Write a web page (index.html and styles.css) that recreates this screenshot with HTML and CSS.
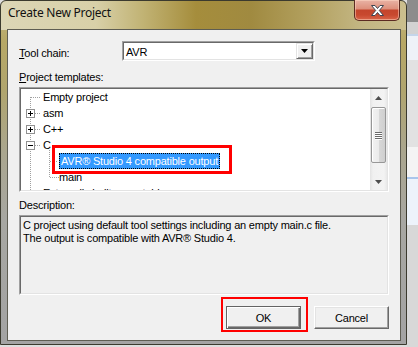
FILE: index.html
```html
<!DOCTYPE html>
<html lang="en">
<head>
    <meta charset="UTF-8">
    <title>Create New Project</title>
    <link rel="stylesheet" href="styles.css">
</head>
<body>
<div class="screen">
    <div class="window">
        <div class="titlebar">
            <span class="title">Create New Project</span>
            <div class="close-btn">
                <svg width="13" height="11" viewBox="0 0 13 11">
                    <polygon points="0.5,0.5 4,0.5 6.5,3.5 9,0.5 12.5,0.5 8.3,5.5 12.5,10.5 9,10.5 6.5,7.5 4,10.5 0.5,10.5 4.7,5.5" fill="#fff" stroke="#3f4450" stroke-width="1"/>
                </svg>
            </div>
        </div>

        <div class="client">
            <div class="field-row">
                <label class="field-label"><u>T</u>ool chain:</label>
                <div class="combo">
                    <div class="combo-inner">
                        <span class="combo-value">AVR</span>
                        <span class="combo-btn">
                            <svg width="7" height="4" viewBox="0 0 7 4"><polygon points="0,0 7,0 3.5,4" fill="#000"/></svg>
                        </span>
                    </div>
                </div>
            </div>

            <div class="section-label"><u>P</u>roject templates:</div>
            <div class="sunken tree-box">
                <div class="sunken-inner tree-inner">
                    <div class="tree">
                        <svg class="tree-lines" width="349" height="101" viewBox="0 0 349 101">
                            <g stroke="#a0a0a0" stroke-dasharray="1 1" fill="none">
                                <line x1="9.5" y1="8" x2="9.5" y2="101"/>
                                <line x1="10" y1="8.5" x2="20" y2="8.5"/>
                                <line x1="14" y1="24.5" x2="20" y2="24.5"/>
                                <line x1="14" y1="40.5" x2="20" y2="40.5"/>
                                <line x1="14" y1="56.5" x2="20" y2="56.5"/>
                                <line x1="28.5" y1="61" x2="28.5" y2="89"/>
                                <line x1="29" y1="72.5" x2="37" y2="72.5"/>
                                <line x1="29" y1="88.5" x2="38" y2="88.5"/>
                            </g>
                            <g fill="#fff" stroke="#919191">
                                <rect x="5.5" y="20.5" width="8" height="8"/>
                                <rect x="5.5" y="36.5" width="8" height="8"/>
                                <rect x="5.5" y="52.5" width="8" height="8"/>
                            </g>
                            <g stroke="#000">
                                <line x1="7" y1="24.5" x2="12" y2="24.5"/>
                                <line x1="9.5" y1="22" x2="9.5" y2="27"/>
                                <line x1="7" y1="40.5" x2="12" y2="40.5"/>
                                <line x1="9.5" y1="38" x2="9.5" y2="43"/>
                                <line x1="7" y1="56.5" x2="12" y2="56.5"/>
                            </g>
                        </svg>
                        <div class="tree-row">Empty project</div>
                        <div class="tree-row">asm</div>
                        <div class="tree-row">C++</div>
                        <div class="tree-row">C</div>
                        <div class="tree-row level-2"><span class="tree-selected">AVR® Studio 4 compatible output</span></div>
                        <div class="tree-row level-2">main</div>
                        <div class="tree-row">Externally built executable</div>
                        <div class="mark mark-tree"></div>
                    </div>
                    <div class="scrollbar">
                        <div class="scroll-arrow">
                            <svg width="7" height="4" viewBox="0 0 7 4"><polygon points="0,4 7,4 3.5,0" fill="#4d4d4d"/></svg>
                        </div>
                        <div class="scroll-track">
                            <div class="scroll-thumb">
                                <span class="grip"></span><span class="grip"></span><span class="grip"></span><span class="grip"></span>
                            </div>
                        </div>
                        <div class="scroll-arrow">
                            <svg width="7" height="4" viewBox="0 0 7 4"><polygon points="0,0 7,0 3.5,4" fill="#4d4d4d"/></svg>
                        </div>
                    </div>
                </div>
            </div>

            <div class="section-label desc-label">Description:</div>
            <div class="sunken desc-box">
                <div class="sunken-inner desc-inner">
                    C project using default tool settings including an empty main.c file.<br>
                    The output is compatible with AVR® Studio 4.
                </div>
            </div>

            <div class="button-row">
                <button class="btn btn-default">OK</button>
                <button class="btn">Cancel</button>
                <div class="mark mark-ok"></div>
            </div>
        </div>
    </div>
    <div class="backdrop"></div>
</div>
</body>
</html>
```

FILE: styles.css
```css
* {
    box-sizing: border-box;
}
html, body {
    margin: 0;
    padding: 0;
}
body {
    width: 418px;
    height: 347px;
    overflow: hidden;
    background-color: #dedede;
    font-family: "Liberation Sans", Arial, sans-serif;
    font-size: 11px;
    letter-spacing: -0.2px;
    color: #000;
}
.screen {
    display: flex;
    height: 347px;
}
.window {
    width: 407px;
    height: 345px;
    display: flex;
    flex-direction: column;
    border: 1px solid #3b3a2e;
    border-radius: 6px 6px 0 0;
    padding: 0 5px 3px 6px;
    background:
        linear-gradient(to right, #dcd6b6 0, #d8d0a8 95px, #c2b476 140px, #a58d3c 195px, #a08a40 250px, #b3a160 310px, #c3b683 360px, #cbbf8e 407px) top left / 100% 29px no-repeat,
        linear-gradient(to bottom, #c6b985 0, #b7a866 40px, #b0a56e 90px, #aaa68e 150px, #a7a7a2 220px, #a3a3a3 100%);
}
.titlebar {
    height: 28px;
    display: flex;
    align-items: flex-start;
}
.title {
    padding: 4px 0 0 1px;
    font-family: "Noto Sans", sans-serif;
    font-size: 12px;
    letter-spacing: -0.25px;
    line-height: 16px;
    color: #111;
}
.close-btn {
    margin: -1px 1px 0 auto;
    width: 46px;
    height: 21px;
    display: flex;
    align-items: center;
    justify-content: center;
    border: 1px solid #5c2b22;
    border-top: none;
    border-radius: 0 0 5px 5px;
    background: linear-gradient(to bottom, #e9b3a5 0, #dd8f7b 45%, #c4452c 50%, #c8492f 75%, #d9654a 100%);
    box-shadow: inset 0 0 0 1px rgba(255, 220, 200, 0.5);
}
.close-btn svg {
    margin-top: 1px;
}
.client {
    flex: 1;
    border: 1px solid #5e5d52;
    background-color: #f0f0f0;
    padding: 11px;
    display: flex;
    flex-direction: column;
}
.field-row {
    display: flex;
    height: 20px;
}
.field-label {
    width: 103px;
    padding-top: 5px;
    line-height: 15px;
}
.combo {
    width: 193px;
    height: 20px;
    border: 1px solid;
    border-color: #a0a0a0 #fff #fff #a0a0a0;
}
.combo-inner {
    height: 100%;
    display: flex;
    border: 1px solid;
    border-color: #696969 #e3e3e3 #e3e3e3 #696969;
    background-color: #fff;
}
.combo-value {
    flex: 1;
    padding: 2px 0 0 2px;
    line-height: 15px;
}
.combo-btn {
    width: 17px;
    height: 16px;
    display: flex;
    align-items: center;
    justify-content: center;
    background-color: #f0f0f0;
    border: 1px solid;
    border-color: #e3e3e3 #696969 #696969 #e3e3e3;
    box-shadow: inset 1px 1px 0 #fff, inset -1px -1px 0 #a0a0a0;
}
.section-label {
    margin-top: 9px;
    line-height: 15px;
}
.desc-label {
    margin-top: 6px;
}
.sunken {
    border: 1px solid;
    border-color: #a0a0a0 #fff #fff #a0a0a0;
    margin-top: 2px;
}
.sunken-inner {
    height: 100%;
    border: 1px solid;
    border-color: #696969 #e3e3e3 #e3e3e3 #696969;
}
.tree-box {
    height: 105px;
}
.tree-inner {
    display: flex;
    background-color: #fff;
}
.tree {
    flex: 1;
    position: relative;
    overflow: hidden;
}
.tree-lines {
    position: absolute;
    top: 0;
    left: 0;
}
.tree-row {
    position: relative;
    height: 16px;
    line-height: 16px;
    padding-left: 22px;
    white-space: nowrap;
}
.tree-row.level-2 {
    padding-left: 38px;
}
.tree-selected {
    display: inline-block;
    vertical-align: top;
    height: 16px;
    line-height: 14px;
    padding: 0 1px;
    border: 1px dotted #000;
    background-color: #3399ff;
    color: #fff;
}
.mark {
    position: absolute;
    border: 3px solid #ff0000;
}
.mark-tree {
    left: 31px;
    top: 56px;
    width: 180px;
    height: 29px;
}
.scrollbar {
    width: 17px;
    display: flex;
    flex-direction: column;
    background: linear-gradient(to right, #e3e3e3 0, #f0f0f0 3px, #f3f3f3 14px, #e8e8e8 17px);
}
.scroll-arrow {
    height: 17px;
    display: flex;
    align-items: center;
    justify-content: center;
}
.scroll-track {
    flex: 1;
    padding-top: 1px;
}
.scroll-thumb {
    margin: 0 1px;
    height: 56px;
    border: 1px solid #979797;
    border-radius: 2px;
    background: linear-gradient(to right, #f2f2f2 0, #ebebeb 50%, #d8d8d8 51%, #cfcfcf 100%);
    box-shadow: inset 1px 1px 0 #fff;
    display: flex;
    flex-direction: column;
    align-items: center;
    justify-content: center;
    gap: 1px;
}
.grip {
    width: 7px;
    height: 1px;
    background-color: #6b6b6b;
    box-shadow: 0 1px 0 #fff;
}
.desc-box {
    height: 80px;
}
.desc-inner {
    padding: 2px 2px;
    line-height: 13px;
}
.button-row {
    position: relative;
    margin-top: 11px;
    display: flex;
    justify-content: flex-end;
    gap: 13px;
}
.btn {
    width: 75px;
    height: 23px;
    padding: 0;
    font-family: "Liberation Sans", Arial, sans-serif;
    font-size: 11px;
    letter-spacing: -0.2px;
    color: #000;
    background-color: #f0f0f0;
    border: 1px solid;
    border-color: #fff #696969 #696969 #fff;
    box-shadow: inset -1px -1px 0 #a0a0a0, inset 1px 1px 0 #e3e3e3;
}
.btn-default {
    border-color: #646464;
    box-shadow: inset 1px 1px 0 #fff, inset -1px -1px 0 #696969, inset -2px -2px 0 #a0a0a0;
}
.mark-ok {
    left: 202px;
    top: -9px;
    width: 87px;
    height: 35px;
    border-width: 2px;
}
.backdrop {
    flex: 1;
    background: linear-gradient(to bottom, #8c8c8c 0, #8c8c8c 22px, #d2d2d2 22px, #d2d2d2 34px, #c4d5ea 34px, #c4d5ea 36px, #eef2f8 36px, #eef2f8 60px, #e2e2e2 60px, #e2e2e2 147px, #f4f4f4 147px, #f4f4f4 177px, #a9c6ec 177px, #a9c6ec 179px, #edf3fb 179px, #edf3fb 225px, #d8d8d8 225px);
}
```
